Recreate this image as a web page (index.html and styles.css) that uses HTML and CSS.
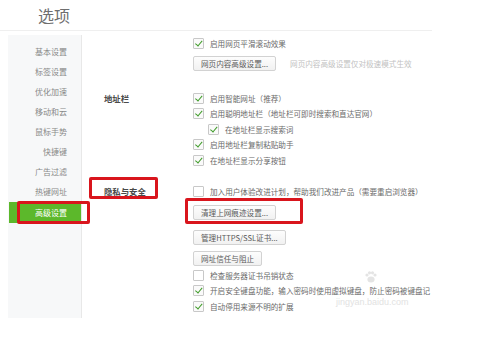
FILE: index.html
```html
<!DOCTYPE html>
<html lang="zh-CN">
<head>
<meta charset="UTF-8">
<meta name="viewport" content="width=device-width, initial-scale=1.0">
<title>选项</title>
<link rel="stylesheet" href="styles.css">
</head>
<body>
    <div class="header">
        <h1>选项</h1>
    </div>

    <div class="main">
        <ul class="sidebar">
            <li>基本设置</li>
            <li>标签设置</li>
            <li>优化加速</li>
            <li>移动和云</li>
            <li>鼠标手势</li>
            <li>快捷键</li>
            <li>广告过滤</li>
            <li>热键网址</li>
            <li class="active">高级设置</li>
        </ul>

        <div class="content">
            <div class="section">
                <div class="section-label"></div>
                <div class="section-body">
                    <label class="row"><span class="box checked"></span>启用网页平滑滚动效果</label>
                    <div class="btn-row first">
                        <button>网页内容高级设置...</button>
                        <span class="hint">网页内容高级设置仅对极速模式生效</span>
                    </div>
                </div>
            </div>

            <div class="section address">
                <div class="section-label">地址栏</div>
                <div class="section-body">
                    <label class="row"><span class="box checked"></span>启用智能网址（推荐）</label>
                    <label class="row"><span class="box checked"></span>启用聪明地址栏（地址栏可即时搜索和直达官网）</label>
                    <label class="row sub"><span class="box checked"></span>在地址栏显示搜索词</label>
                    <label class="row"><span class="box checked"></span>启用地址栏复制粘贴助手</label>
                    <label class="row"><span class="box checked"></span>在地址栏显示分享按钮</label>
                </div>
            </div>

            <div class="section privacy">
                <div class="section-label">隐私与安全</div>
                <div class="section-body">
                    <label class="row"><span class="box"></span>加入用户体验改进计划，帮助我们改进产品（需要重启浏览器）</label>
                    <div class="btn-row clear"><button>清理上网痕迹设置...</button></div>
                    <div class="btn-row ssl"><button>管理HTTPS/SSL证书...</button></div>
                    <div class="btn-row trust"><button>网址信任与阻止</button></div>
                    <label class="row after-btn"><span class="box"></span>检查服务器证书吊销状态</label>
                    <label class="row"><span class="box checked"></span>开启安全键盘功能，输入密码时使用虚拟键盘，防止密码被键盘记</label>
                    <label class="row"><span class="box checked"></span>自动停用来源不明的扩展</label>
                </div>
            </div>
        </div>
    </div>

    <!-- red annotation frames drawn over the screenshot -->
    <div class="mark mark-nav"></div>
    <div class="mark mark-label"></div>
    <div class="mark mark-btn"></div>

    <svg class="paw" width="14" height="12" viewBox="0 0 14 12">
        <circle cx="3" cy="4" r="1.6" fill="#e4e4e4"/>
        <circle cx="5.5" cy="1.8" r="1.6" fill="#e4e4e4"/>
        <circle cx="8.5" cy="1.8" r="1.6" fill="#e4e4e4"/>
        <circle cx="11" cy="4" r="1.6" fill="#e4e4e4"/>
        <ellipse cx="7" cy="8.5" rx="3.6" ry="3" fill="#e4e4e4"/>
    </svg>
    <div class="watermark">jingyan.baidu.com</div>
</body>
</html>
```

FILE: styles.css
```css
body {
    margin: 0;
    background-color: #fff;
    font-family: "Noto Sans CJK SC", "Noto Sans", sans-serif;
    color: #666;
    position: relative;
    width: 500px;
    height: 360px;
    overflow: hidden;
}

.header {
    width: 432px;
    height: 30px;
    border-bottom: 1px solid #efefef;
}

h1 {
    margin: 0;
    padding-left: 38px;
    font-size: 16px;
    font-weight: normal;
    line-height: 30px;
    color: #6e6e6e;
}

.main {
    display: flex;
    margin-top: 4px;
}

.sidebar {
    list-style: none;
    margin: 0 0 0 8px;
    padding: 7px 0 0;
    width: 73px;
    height: 276px;
    background-color: #f7f8f9;
    border-right: 1px solid #e8e8e8;
}

.sidebar li {
    height: 20px;
    line-height: 20px;
    padding-right: 14px;
    text-align: right;
    font-size: 8px;
    color: #888;
}

.sidebar li.active {
    margin-left: 1px;
    height: 21px;
    line-height: 21px;
    background-color: #5cb82b;
    color: #fff;
}

.content {
    padding-left: 22px;
    padding-top: 1px;
}

.section {
    display: flex;
}

.section-label {
    width: 89px;
    flex-shrink: 0;
    font-size: 8.4px;
    font-weight: bold;
    color: #4a4a4a;
    line-height: 15.5px;
}

.address {
    margin-top: 20px;
}

.privacy {
    margin-top: 16px;
}

.row {
    display: flex;
    align-items: center;
    height: 15.5px;
    font-size: 7.6px;
    white-space: nowrap;
    color: #6a6a6a;
}

.row.sub {
    padding-left: 15px;
}

.box {
    width: 9px;
    height: 9px;
    border: 1px solid #c8c8c8;
    border-radius: 1px;
    background-color: #fff;
    margin-right: 6px;
    flex-shrink: 0;
    position: relative;
}

.box.checked {
    background-color: #fafafa;
}

.box.checked::after {
    content: "";
    position: absolute;
    left: 3px;
    top: 0;
    width: 2.5px;
    height: 5.5px;
    border-right: 1.5px solid #3e9b28;
    border-bottom: 1.5px solid #3e9b28;
    transform: rotate(40deg);
}

.btn-row {
    display: flex;
    align-items: center;
}

.btn-row.first {
    margin-top: 4px;
}

.btn-row.clear {
    margin-top: 5px;
}

.btn-row.ssl {
    margin-top: 10px;
}

.btn-row.trust {
    margin-top: 6px;
}

.row.after-btn {
    margin-top: 2px;
}

button {
    height: 15px;
    padding: 0 7px;
    font-family: inherit;
    font-size: 7.6px;
    color: #5a5a5a;
    background: linear-gradient(#fdfdfd, #f1f1f1);
    border: 1px solid #d2d2d2;
    border-radius: 2px;
    white-space: nowrap;
}

.hint {
    margin-left: 14px;
    font-size: 7.6px;
    color: #c2c2c2;
}

.mark {
    position: absolute;
    border: 3px solid #d9151d;
    border-radius: 2px;
    box-sizing: border-box;
}

.mark-nav {
    left: 17px;
    top: 201px;
    width: 73px;
    height: 23px;
}

.mark-label {
    left: 89px;
    top: 177px;
    width: 69px;
    height: 22px;
}

.mark-btn {
    left: 185px;
    top: 198px;
    width: 118px;
    height: 26px;
}

.paw {
    position: absolute;
    left: 364px;
    top: 271px;
}

.watermark {
    position: absolute;
    left: 336px;
    top: 297px;
    font-family: "Liberation Sans", sans-serif;
    font-size: 9px;
    color: #e2e2e2;
}
```
